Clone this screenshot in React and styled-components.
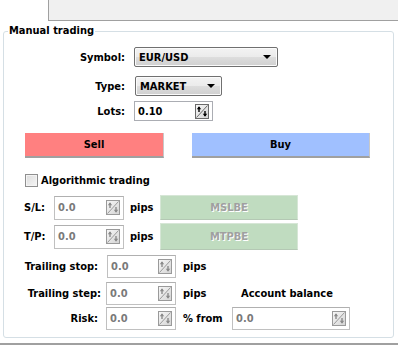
import React from 'react'
import styled, { createGlobalStyle } from 'styled-components'

const Global = createGlobalStyle`
  html, body { margin: 0; padding: 0; background: #fff; }
  body {
    font-family: "DejaVu Sans Condensed", "DejaVu Sans", Tahoma, sans-serif;
    font-size: 11px;
    font-weight: bold;
    color: #000;
  }
`

const Page = styled.div`
  width: 398px;
  height: 347px;
  overflow: hidden;
  display: flex;
  flex-direction: column;
`

const TabBar = styled.div`
  display: flex;
  height: 21px;
`

const ActiveTab = styled.div`
  width: 48px;
  background: #fff;
`

const TabFill = styled.div`
  flex: 1;
  background: #f0f0f0;
  border-left: 1px solid #a0a0a0;
  border-bottom: 1px solid #a0a0a0;
`

const Group = styled.fieldset`
  margin: 4px 4px 0 3px;
  padding: 0 0 7px 0;
  border: 1px solid #d5dfe5;
  border-radius: 3px;
  min-width: 0;
`

const Legend = styled.legend`
  margin-left: 4px;
  padding: 0 1px;
  line-height: 12px;
`

const BottomLine = styled.div`
  margin-top: 5px;
  height: 2px;
  background: #a0a0a0;
`

const Row = styled.div`
  display: flex;
  align-items: center;
  margin-top: ${p => p.$mt || 0}px;
  padding-left: ${p => p.$pl || 0}px;
  gap: ${p => p.$gap || 0}px;
`

const Label = styled.span`
  width: ${p => p.$w}px;
  text-align: ${p => p.$align || 'right'};
  padding-right: ${p => p.$pr || 0}px;
  box-sizing: border-box;
  flex-shrink: 0;
  white-space: nowrap;
`

const Combo = styled.div`
  width: ${p => p.$w}px;
  height: 20px;
  box-sizing: border-box;
  border: 1px solid #707070;
  border-radius: 2px;
  background: linear-gradient(#f3f3f3 0%, #ebebeb 50%, #dddddd 51%, #d0d0d0 100%);
  display: flex;
  align-items: center;
  padding: 0 6px 0 4px;
  box-shadow: inset 0 0 0 1px #fbfbfb;
`

const ComboText = styled.span`
  flex: 1;
`

const Caret = styled.span`
  width: 0;
  height: 0;
  border-left: 4px solid transparent;
  border-right: 4px solid transparent;
  border-top: 4px solid #000;
`

const Spin = styled.div`
  width: ${p => p.$w}px;
  height: ${p => p.$h}px;
  box-sizing: border-box;
  border: 1px solid ${p => (p.$off ? '#c0c0c0' : '#abadb3')};
  border-top-color: ${p => (p.$off ? '#b0b0b0' : '#abadb3')};
  background: #fff;
  display: flex;
  align-items: center;
  padding: 0 3px 0 3px;
  flex-shrink: 0;
  color: ${p => (p.$off ? '#7a7a7a' : '#000')};
`

const SpinValue = styled.span`
  flex: 1;
`

const ActionButton = styled.div`
  width: ${p => p.$w}px;
  height: 25px;
  box-sizing: border-box;
  background: ${p => p.$bg};
  border-bottom: 2px solid #a0a0a0;
  border-right: 1px solid #c8c8c8;
  display: flex;
  align-items: center;
  justify-content: center;
  flex-shrink: 0;
`

const GhostButton = styled.div`
  width: 138px;
  height: ${p => p.$h}px;
  box-sizing: border-box;
  background: #c0dcc0;
  border: 1px solid #d6e6d6;
  border-bottom-color: #b4c8b4;
  color: #a0a0a0;
  text-shadow: 1px 1px 0 #fff;
  display: flex;
  align-items: center;
  justify-content: center;
  margin-left: 7px;
  flex-shrink: 0;
`

const Check = styled.span`
  width: 13px;
  height: 13px;
  box-sizing: border-box;
  border: 1px solid #8f8f8f;
  background: linear-gradient(135deg, #dcdcdc, #f6f6f6);
  box-shadow: inset 0 0 0 1px #f4f4f4;
  margin-right: 3px;
`

const Unit = styled.span`
  width: ${p => p.$w}px;
  padding-left: ${p => p.$pl || 0}px;
  box-sizing: border-box;
  flex-shrink: 0;
  white-space: nowrap;
`

const Caption = styled.span`
  padding-left: 9px;
  white-space: nowrap;
`

function SpinIcon({ off }) {
  const ink = off ? '#8a8a8a' : '#000'
  const edge = off ? '#9a9a9a' : '#6a6a6a'
  const id = off ? 'spg-off' : 'spg-on'
  return (
    <svg width="14" height="15" viewBox="0 0 14 15">
      <defs>
        <linearGradient id={id} x1="0" y1="0" x2="1" y2="1">
          <stop offset="0" stopColor="#f8f8f8" />
          <stop offset="1" stopColor="#d4d4d4" />
        </linearGradient>
      </defs>
      <rect x="0.5" y="0.5" width="13" height="14" fill={`url(#${id})`} stroke={edge} />
      <line x1="1.5" y1="13.5" x2="12.5" y2="1.5" stroke={edge} strokeWidth="1" />
      <path d="M4 3v5" stroke={ink} strokeWidth="1.4" />
      <path d="M1.8 5.2L4 2.2L6.2 5.2Z" fill={ink} />
      <path d="M10 7v5" stroke={ink} strokeWidth="1.4" />
      <path d="M7.8 9.8L10 12.8L12.2 9.8Z" fill={ink} />
    </svg>
  )
}

function SpinBox({ value, w, h, off }) {
  return (
    <Spin $w={w} $h={h} $off={off}>
      <SpinValue>{value}</SpinValue>
      <SpinIcon off={off} />
    </Spin>
  )
}

export default function App() {
  return (
    <Page>
      <Global />
      <TabBar>
        <ActiveTab />
        <TabFill />
      </TabBar>
      <Group>
        <Legend>Manual trading</Legend>

        <Row $mt={10}>
          <Label $w={130} $pr={9}>Symbol:</Label>
          <Combo $w={144}>
            <ComboText>EUR/USD</ComboText>
            <Caret />
          </Combo>
        </Row>
        <Row $mt={9}>
          <Label $w={131} $pr={10}>Type:</Label>
          <Combo $w={87}>
            <ComboText>MARKET</ComboText>
            <Caret />
          </Combo>
        </Row>
        <Row $mt={5}>
          <Label $w={130} $pr={9}>Lots:</Label>
          <SpinBox value="0.10" w={79} h={20} />
        </Row>

        <Row $mt={12} $pl={21} $gap={28}>
          <ActionButton $w={139} $bg="#ff8080">Sell</ActionButton>
          <ActionButton $w={178} $bg="#a0c0ff">Buy</ActionButton>
        </Row>

        <Row $mt={16} $pl={21}>
          <Check />
          <span>Algorithmic trading</span>
        </Row>

        <Row $mt={8} $pl={20}>
          <Label $w={30} $align="left">S/L:</Label>
          <SpinBox value="0.0" w={70} h={24} off />
          <Unit $w={29} $pl={6}>pips</Unit>
          <GhostButton $h={25}>MSLBE</GhostButton>
        </Row>
        <Row $mt={3} $pl={20}>
          <Label $w={30} $align="left">T/P:</Label>
          <SpinBox value="0.0" w={70} h={24} off />
          <Unit $w={29} $pl={6}>pips</Unit>
          <GhostButton $h={27}>MTPBE</GhostButton>
        </Row>

        <Row $mt={5} $pl={20}>
          <Label $w={83} $pr={9}>Trailing stop:</Label>
          <SpinBox value="0.0" w={69} h={23} off />
          <Unit $w={49} $pl={7}>pips</Unit>
        </Row>
        <Row $mt={4} $pl={20}>
          <Label $w={82} $pr={5}>Trailing step:</Label>
          <SpinBox value="0.0" w={70} h={23} off />
          <Unit $w={56} $pl={7}>pips</Unit>
          <Caption>Account balance</Caption>
        </Row>
        <Row $mt={2} $pl={20}>
          <Label $w={82} $pr={8}>Risk:</Label>
          <SpinBox value="0.0" w={70} h={23} off />
          <Unit $w={56} $pl={7}>% from</Unit>
          <SpinBox value="0.0" w={118} h={23} off />
        </Row>
      </Group>
      <BottomLine />
    </Page>
  )
}
